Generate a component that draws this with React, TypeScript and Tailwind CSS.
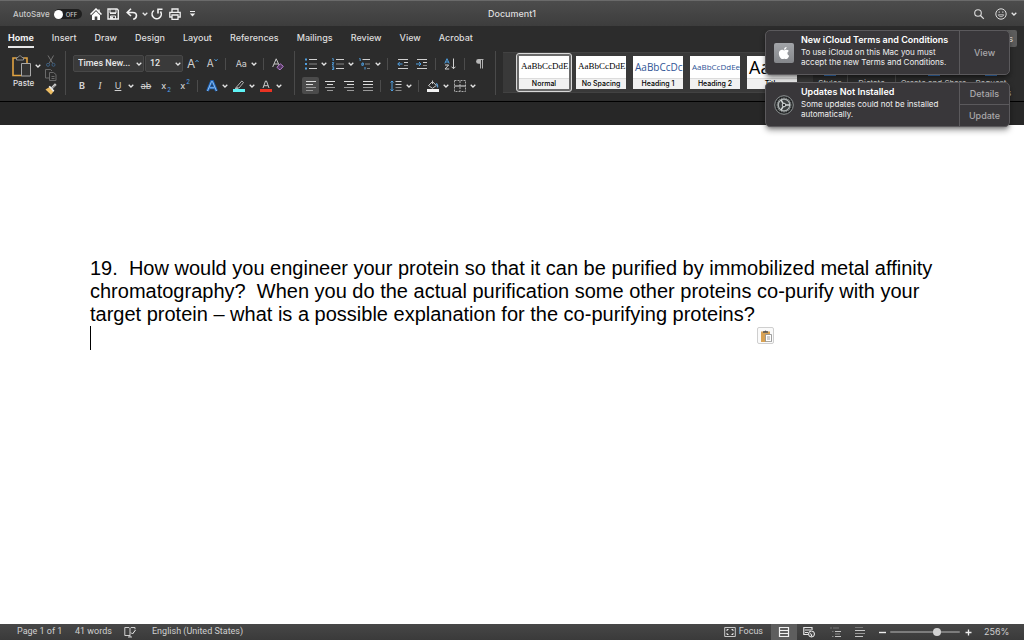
import type { ReactNode } from 'react'
import clsx from 'clsx'
import { FaApple } from 'react-icons/fa'

const TABS = ['Home', 'Insert', 'Draw', 'Design', 'Layout', 'References', 'Mailings', 'Review', 'View', 'Acrobat']

const STYLES = [
  { name: 'Normal', sample: 'AaBbCcDdE', face: 'font-["Liberation_Serif",serif] text-[9px] text-black' },
  { name: 'No Spacing', sample: 'AaBbCcDdE', face: 'font-["Liberation_Serif",serif] text-[9px] text-black' },
  { name: 'Heading 1', sample: 'AaBbCcDc', face: 'font-["Open_Sans",sans-serif] text-[10px] text-[#2f5496]' },
  { name: 'Heading 2', sample: 'AaBbCcDdEe', face: 'font-["Open_Sans",sans-serif] text-[8px] text-[#2f5496]' },
  { name: 'Title', sample: 'AaBb', face: 'font-["Open_Sans",sans-serif] text-[18px] text-black' },
]

function Icon({ children, w = 12, h = 12 }: { children: ReactNode; w?: number; h?: number }) {
  return (
    <svg width={w} height={h} viewBox={`0 0 ${w} ${h}`} fill="none" stroke="#d0d0d0" className="shrink-0" aria-hidden="true">
      {children}
    </svg>
  )
}

function Chevron() {
  return (
    <Icon w={6} h={4}>
      <path d="M.7.7 3 3 5.3.7" stroke="#e4e4e4" strokeWidth="1.3" />
    </Icon>
  )
}

function Tool({ label, className, children }: { label: string; className?: string; children: ReactNode }) {
  return (
    <button
      type="button"
      aria-label={label}
      className={clsx('flex h-[17px] min-w-3 shrink-0 items-center justify-center text-[#d0d0d0]', className)}
    >
      {children}
    </button>
  )
}

function SplitTool({ label, className, children }: { label: string; className?: string; children: ReactNode }) {
  return (
    <Tool label={label} className={clsx('gap-1', className)}>
      <span className="flex w-3 justify-center">{children}</span>
      <Chevron />
    </Tool>
  )
}

function Sep({ className }: { className?: string }) {
  return <span className={clsx('h-3 w-px shrink-0 bg-[#4c4c4c]', className)} />
}

function GroupSep() {
  return <span className="h-11 w-px shrink-0 bg-[#4a4a4a]" />
}

function TitleBar() {
  return (
    <header className="grid h-[26px] grid-cols-[1fr_auto_1fr] items-center border-t border-[#6a6a6a] bg-linear-to-b from-[#4c4c4c] to-[#3d3d3d] pt-px">
      <div className="flex items-center pl-[13px]">
        <label htmlFor="autosave" className="mr-1 text-[8px] font-medium text-[#c9c9c9]">AutoSave</label>
        <button
          id="autosave"
          type="button"
          role="switch"
          aria-checked="false"
          className="flex h-[10px] w-7 items-center gap-[3px] rounded-full bg-[#1f1f1f] text-[6px] font-medium text-[#c9c9c9]"
        >
          <span className="size-[9px] rounded-full bg-white" />
          OFF
        </button>
        <Tool label="Home" className="ml-2">
          <Icon>
            <path d="M.5 6.500 6 1l5.500 5.500" stroke="#fff" strokeWidth="1.500" />
            <path d="M9 1.500v3" stroke="#fff" strokeWidth="1.500" />
            <path d="M2 7.200 6 3.300l4 3.900V12H7.300V8.500H4.700V12H2z" fill="#fff" stroke="none" />
          </Icon>
        </Tool>
        <Tool label="Save" className="ml-[5px]">
          <Icon>
            <path d="M1 1h9l1.300 1.300V11H1z" stroke="#eee" strokeWidth="1.400" />
            <path d="M3 1v4h6V1M3.500 11V8h5v3z" stroke="#eee" />
            <path d="M4 8.500h2V11H4zM3 4.500h6v1.500H3z" fill="#eee" stroke="none" />
          </Icon>
        </Tool>
        <SplitTool label="Undo" className="ml-[7px]">
          <Icon>
            <path d="M5 .8 1.200 4.500 5 8M1.500 4.500h5.300c5 0 4.600 6 .4 6.700" stroke="#f2f2f2" strokeWidth="1.600" />
          </Icon>
        </SplitTool>
        <Tool label="Repeat" className="ml-[3px]">
          <Icon>
            <path d="M2.800 2.500a4.600 4.600 0 1 0 6.700 1M7 5.500V1.200h4.500" stroke="#f2f2f2" strokeWidth="1.600" />
          </Icon>
        </Tool>
        <Tool label="Print" className="ml-[6px]">
          <Icon>
            <path d="M3 4V1h6v3M3 9H.8V4.300h10.400V9H9" stroke="#eee" strokeWidth="1.300" />
            <path d="M3 7h6v4.300H3z" stroke="#eee" strokeWidth="1.300" />
          </Icon>
        </Tool>
        <Tool label="Customize toolbar" className="ml-[6px]">
          <Icon w={7} h={6}>
            <path d="M1 .5h5" stroke="#eee" />
            <path d="M.8 2.500h5.400L3.500 5.500z" fill="#eee" stroke="none" />
          </Icon>
        </Tool>
      </div>
      <h1 className="text-[9px] font-medium text-[#dedede]">Document1</h1>
      <div className="flex items-center justify-end pr-[7px]">
        <Tool label="Search">
          <Icon>
            <circle cx="5" cy="5" r="3.300" stroke="#ddd" strokeWidth="1.100" />
            <path d="m7.500 7.500 3.300 3.300" stroke="#ddd" strokeWidth="1.200" />
          </Icon>
        </Tool>
        <SplitTool label="Feedback" className="ml-[10px]">
          <Icon>
            <circle cx="6" cy="6" r="5.200" stroke="#ddd" />
            <path d="M3.300 6.800c.8 2.500 4.600 2.500 5.400 0z" stroke="#ddd" strokeWidth=".8" />
            <path d="M3.700 3.500h1v1.300h-1zM7.300 3.500h1v1.300h-1z" fill="#ddd" stroke="none" />
          </Icon>
        </SplitTool>
      </div>
    </header>
  )
}

function TabBar() {
  return (
    <nav className="flex h-6 items-start gap-[18px] pl-2">
      {TABS.map((tab, i) => (
        <button
          key={tab}
          type="button"
          className={clsx(
            'mt-1 border-b-2 text-[9px] leading-[16px]',
            i === 0 ? 'border-[#e6e6e6] font-bold text-[#f0f0f0]' : 'border-transparent font-medium text-[#dcdcdc]',
          )}
        >
          {tab}
        </button>
      ))}
      <button type="button" className="mt-1 mr-[7px] ml-auto h-[17px] rounded-[2px] bg-[#5c5c5c] px-1 text-[9px] font-medium text-[#d8d8d8]">
        Comments
      </button>
    </nav>
  )
}

function ClipboardGroup() {
  return (
    <div className="flex h-11 pl-3">
      <button type="button" className="flex w-[28px] flex-col items-start pt-1 text-[8px] leading-[10px] font-medium text-[#e0e0e0]">
        <span className="flex items-center gap-1">
          <Icon w={19} h={22}>
            <path d="M4.500 3H1v17.500h9M11.500 3H15v5" stroke="#e0a242" strokeWidth="1.600" />
            <path d="M4.500 5V2.500H6c.4-2.200 3.600-2.200 4 0h1.500V5z" stroke="#8f8f8f" />
            <path d="M9.500 8.500h9V21h-9z" fill="#333" stroke="#a8a8a8" />
          </Icon>
          <Chevron />
        </span>
        <span className="mt-px pl-px">Paste</span>
      </button>
      <div className="ml-1 flex w-[21px] flex-col justify-between">
        <button type="button" aria-label="Cut" className="pt-1 pl-px">
          <Icon>
            <path d="M3 .5 7.800 8.500M8.500.5 4 8.500" stroke="#737373" />
            <circle cx="3" cy="9.800" r="1.500" stroke="#3d5f80" />
            <circle cx="8.500" cy="9.800" r="1.500" stroke="#3d5f80" />
          </Icon>
        </button>
        <button type="button" aria-label="Copy" className="pl-px">
          <Icon>
            <path d="M4 9H.5V.5h5L7 2" stroke="#6a6a6a" />
            <path d="M4.500 3.500h4l2.500 2V11.500H4.500zM6.500 7.500h3M6.500 9.500h3" stroke="#6a6a6a" />
          </Icon>
        </button>
        <button type="button" aria-label="Format painter" className="pl-px">
          <Icon>
            <path d="M.5 6.500 4.500 4l4 4.500L6 11.800z" fill="#edbd63" stroke="none" />
            <path d="m4.300 3.300 4.500 5" stroke="#f5f5f5" strokeWidth="1.600" />
            <path d="M6.500 5.500 10.800 1.200" stroke="#d0d0d0" strokeWidth="2.400" />
            <path d="m7.500 5 2.500-2.500" stroke="#444" strokeWidth=".8" />
          </Icon>
        </button>
      </div>
    </div>
  )
}

function RibbonSelect({ label, className, value }: { label: string; className: string; value: string }) {
  return (
    <span className={clsx('relative flex h-[17px] shrink-0', className)}>
      <select
        aria-label={label}
        className="w-full appearance-none rounded-[2px] border border-[#484848] bg-[#3a3a3a] pl-1 font-[Roboto,sans-serif] text-[9px] font-medium text-[#e8e8e8]"
      >
        <option>{value}</option>
      </select>
      <span className="pointer-events-none absolute inset-y-0 right-[2px] flex items-center">
        <Chevron />
      </span>
    </span>
  )
}

function FontGroup() {
  return (
    <div className="flex h-11 w-[221px] shrink-0 flex-col gap-[5px] pt-1">
      <div className="flex h-[17px] items-center">
        <RibbonSelect label="Font" className="w-[71px]" value="Times New..." />
        <RibbonSelect label="Font size" className="ml-px w-[38px]" value="12" />
        <Tool label="Increase font size" className="ml-1 text-[12px]">
          A
          <Icon w={4} h={10}><path d="M.5 3 2 1.200 3.500 3" stroke="#4f9fe0" /></Icon>
        </Tool>
        <Tool label="Decrease font size" className="ml-[7px] text-[10px]">
          A
          <Icon w={4} h={12}><path d="M.5 1.200 2 3 3.500 1.200" stroke="#4f9fe0" /></Icon>
        </Tool>
        <Sep className="ml-[7px]" />
        <SplitTool label="Change case" className="ml-[9px] text-[9px]">Aa</SplitTool>
        <Sep className="ml-[6px]" />
        <Tool label="Clear formatting" className="ml-2">
          <Icon>
            <path d="M.7 9 4.200.8 7.500 8M2 6h4" stroke="#c8c8c8" />
            <path d="m5 9.200 3.300-3.400 3 2.500L8.500 11.500H7z" fill="#533760" stroke="#b77fd0" />
          </Icon>
        </Tool>
      </div>
      <div className="flex h-[17px] items-center pl-[3px] text-[9px]">
        <Tool label="Bold" className="font-bold">B</Tool>
        <Tool label="Italic" className="ml-[6px] font-['Liberation_Serif',serif] text-[10px] italic">I</Tool>
        <SplitTool label="Underline" className="ml-[6px] underline">U</SplitTool>
        <Tool label="Strikethrough" className="ml-[6px] text-[#a8a8a8] line-through">ab</Tool>
        <Tool label="Subscript" className="ml-2 gap-px font-medium">
          x<span className="pt-2 text-[6px] text-[#4f9fe0]">2</span>
        </Tool>
        <Tool label="Superscript" className="ml-[7px] gap-px font-medium">
          x<span className="pb-2 text-[6px] text-[#4f9fe0]">2</span>
        </Tool>
        <Sep className="ml-[6px]" />
        <SplitTool label="Text effects" className="ml-2">
          <Icon>
            <path d="M1.500 11 5.500 1.500h1L10.500 11M3.500 7.800h5" stroke="#1f62b5" strokeWidth="3" />
            <path d="M1.500 11 5.500 1.500h1L10.500 11M3.500 7.800h5" stroke="#8fc1f2" strokeWidth="1" />
          </Icon>
        </SplitTool>
        <SplitTool label="Highlight colour" className="ml-[5px]">
          <Icon>
            <path d="M4 6.500 8.800 1l1.700 1.500L6 8H4zM3.800 7 2 8.500h3" stroke="#b5b5b5" />
            <path d="M0 9h12v3H0z" fill="#5ff3f5" stroke="none" />
          </Icon>
        </SplitTool>
        <SplitTool label="Font colour" className="ml-[5px]">
          <Icon>
            <path d="M3 8 5.500 1h1L9 8M4 5.700h4" stroke="#c8c8c8" />
            <path d="M0 9h12v3H0z" fill="#ea3323" stroke="none" />
          </Icon>
        </SplitTool>
      </div>
    </div>
  )
}

function AlignIcon({ rows }: { rows: [number, number][] }) {
  return (
    <Icon>
      {rows.map(([x, w], i) => (
        <path key={i} d={`M${x} ${1.5 + i * 3}h${w}`} stroke={i < 2 ? '#dcdcdc' : '#9a9a9a'} />
      ))}
    </Icon>
  )
}

const ALIGNMENTS: { label: string; rows: [number, number][] }[] = [
  { label: 'Align left', rows: [[1, 10], [1, 7], [1, 10], [1, 7]] },
  { label: 'Center', rows: [[1, 10], [3, 6], [1, 10], [3, 6]] },
  { label: 'Align right', rows: [[1, 10], [4, 7], [1, 10], [4, 7]] },
  { label: 'Justify', rows: [[1, 10], [1, 10], [1, 10], [1, 10]] },
]

function ParagraphGroup() {
  return (
    <div className="flex h-11 w-[200px] shrink-0 flex-col gap-[5px] pt-1 pl-[7px]">
      <div className="flex h-[17px] items-center pl-[3px]">
        <SplitTool label="Bullets">
          <Icon>
            <path d="M4 1.500h8M4 10.500h8" stroke="#d0d0d0" />
            <path d="M4 6h8" stroke="#858585" />
            <path d="M0 .500h2v2H0zM0 5h2v2H0zM0 9.500h2v2H0z" fill="#4f9fe0" stroke="none" />
          </Icon>
        </SplitTool>
        <SplitTool label="Numbering" className="ml-[5px]">
          <Icon>
            <path d="M4 1.500h8M4 10.500h8" stroke="#d0d0d0" />
            <path d="M4 6h8" stroke="#858585" />
            <path d="M.3.600h.9v2.400M0 4.700h1.800L.2 7h1.800M0 8.800h1.700v2.700H0M.5 10.200h1" stroke="#4f9fe0" />
          </Icon>
        </SplitTool>
        <SplitTool label="Multilevel list" className="ml-[5px]">
          <Icon>
            <path d="M3.500 1.500H11" stroke="#d0d0d0" />
            <path d="M6 6h5M8 10.500h3" stroke="#858585" />
            <path d="M.3.600h.9v2.400M3 5h1.300v2.300H2.800zM6 9v2.500" stroke="#4f9fe0" />
          </Icon>
        </SplitTool>
        <Sep className="ml-[6px]" />
        <Tool label="Decrease indent" className="ml-[9px]">
          <Icon>
            <path d="M1 1.500h10M1 10.500h10M7 4.500h4" />
            <path d="M7 7.500h4" stroke="#858585" />
            <path d="M5.500 6H.8M2.800 4 .8 6l2 2" stroke="#4f9fe0" />
          </Icon>
        </Tool>
        <Tool label="Increase indent" className="ml-[7px]">
          <Icon>
            <path d="M1 1.500h10M1 10.500h10M7 4.500h4" />
            <path d="M7 7.500h4" stroke="#858585" />
            <path d="M0 6h5M3 4l2 2-2 2" stroke="#4f9fe0" />
          </Icon>
        </Tool>
        <Sep className="ml-[7px]" />
        <Tool label="Sort" className="ml-2">
          <Icon>
            <path d="M.8 5.500 3 .700 5.200 5.500M1.500 4h3" stroke="#4f9fe0" />
            <path d="M1 7h3.700L1 11h4.200M9.500.5v10.300M7.500 8.700l2 2 2-2" />
          </Icon>
        </Tool>
        <Sep className="ml-2" />
        <Tool label="Show formatting marks" className="ml-[9px]">
          <Icon>
            <path d="M9.500 1.500H5M6.500 1.500v9M8.500 1.500v9" stroke="#b0b0b0" />
            <path d="M6.500 1h-2a2.400 2.400 0 0 0 0 4.800h2z" fill="#b8b8b8" stroke="none" />
          </Icon>
        </Tool>
      </div>
      <div className="flex h-[17px] items-center">
        {ALIGNMENTS.map((a, i) => (
          <Tool key={a.label} label={a.label} className={clsx('mr-[2px] w-[17px] rounded-[2px]', i === 0 && 'bg-[#4b4b4b]')}>
            <AlignIcon rows={a.rows} />
          </Tool>
        ))}
        <Sep className="ml-[2px]" />
        <SplitTool label="Line spacing" className="ml-[9px]">
          <Icon>
            <path d="M2 1v10M.5 2.500 2 1l1.500 1.500M.5 9.500 2 11l1.500-1.500" stroke="#4f9fe0" />
            <path d="M5.500 1.500h6M5.500 4.500h6" />
            <path d="M5.500 7.500h6M5.500 10.500h6" stroke="#8a8a8a" />
          </Icon>
        </SplitTool>
        <Sep className="ml-[6px]" />
        <SplitTool label="Shading" className="ml-2">
          <Icon>
            <path d="M1.500 5.500 5.500 1.500l3.800 4L5.500 8.300zM5.500 4V.5" stroke="#c4c4c4" />
            <path d="M9 3.500c1.500.5 1.800 2 1.500 4" stroke="#5c9bd0" strokeWidth="1.300" />
            <path d="M0 9h12v3H0z" fill="#f2f2f2" stroke="none" />
          </Icon>
        </SplitTool>
        <SplitTool label="Borders" className="ml-[5px]">
          <Icon>
            <path d="M.5.500h11v11H.5zM6 1v10" strokeDasharray="2 1" stroke="#a8a8a8" />
            <path d="M.5 6h11" stroke="#e4e4e4" />
          </Icon>
        </SplitTool>
      </div>
    </div>
  )
}

function StyleGallery() {
  return (
    <div className="mt-px ml-[7px] flex h-[41px] w-[310px] shrink-0 items-center gap-px border-y border-[#424242] bg-[#393939] pl-[13px]">
      {STYLES.map((s, i) => (
        <button
          key={s.name}
          type="button"
          className={clsx(
            'h-[39px] w-14 shrink-0 rounded-[3px] border p-[2px]',
            i === 0 ? 'border-[#d8d8d8] bg-[#6a6a6a]' : 'border-transparent',
          )}
        >
          <span className="flex h-[33px] w-full flex-col overflow-hidden bg-white">
            <span className={clsx('flex h-[22px] items-center overflow-hidden pl-[2px] whitespace-nowrap', s.face)}>
              {s.sample}
            </span>
            <span className="h-[11px] border-t border-[#dcdcdc] bg-[#f1f1f1] text-center text-[7px] leading-[10px] font-medium whitespace-nowrap text-black">
              {s.name}
            </span>
          </span>
        </button>
      ))}
    </div>
  )
}

function RibbonTail() {
  const items = [
    { top: 'Styles', bottom: 'Pane', cls: 'w-[34px]' },
    { top: 'Dictate', bottom: '', cls: 'w-12 border-l' },
    { top: 'Create and Share', bottom: 'Adobe PDF', cls: 'w-[76px] border-l' },
    { top: 'Request', bottom: 'Signatures', cls: 'w-10' },
  ]
  return (
    <div className="flex h-12 text-[8px] leading-[10px] text-[#c8c8c8]">
      {items.map((it, i) => (
        <button key={it.top} type="button" className={clsx('flex flex-col items-center border-[#4a4a4a] whitespace-nowrap', it.cls)}>
          <span className={clsx('mt-1 mb-[2px] h-[21px] w-3 shrink-0', i === 1 ? 'bg-transparent' : 'bg-[#3b7cc9]')} />
          <span>{it.top}</span>
          <span>{it.bottom}</span>
        </button>
      ))}
    </div>
  )
}

function Document() {
  return (
    <main className="flex-1 bg-white pt-[132px] pr-20 pl-[90px] font-['Liberation_Sans',Arial,sans-serif] text-[20px] leading-[23px] text-black">
      <p className="whitespace-pre-wrap">
        {'19.  How would you engineer your protein so that it can be purified by immobilized metal affinity chromatography?  When you do the actual purification some other proteins co-purify with your target protein – what is a possible explanation for the co-purifying proteins?'}
      </p>
      <div className="relative h-6 border-l border-black">
        <button
          type="button"
          aria-label="Paste options"
          className="absolute top-px left-[666px] flex size-[17px] items-center justify-center rounded-[2px] border border-[#cfcfcf] bg-[#fafafa]"
        >
          <Icon>
            <path d="M1 1.500h9V12H1z" fill="#d9a253" stroke="none" />
            <path d="M3 2.800V1.200h1.500a1.200 1 0 0 1 2 0H8v1.600z" fill="#555" stroke="none" />
            <path d="M5.500 4.500h6v7.200h-6z" fill="#fff" stroke="#888" strokeWidth=".8" />
            <path d="M7 7h3M7 9h3" stroke="#888" strokeWidth=".8" />
          </Icon>
        </button>
      </div>
    </main>
  )
}

function GearIcon() {
  const teeth = Array.from({ length: 20 }, (_, i) => i * 18)
  return (
    <svg width="20" height="20" viewBox="0 0 20 20" fill="none" aria-hidden="true">
      <circle cx="10" cy="10" r="9.300" fill="#232526" stroke="#8f9495" strokeWidth="1" />
      {teeth.map((a) => (
        <path key={a} d="M10 2.500v1.500" stroke="#9aa0a0" strokeWidth="1" transform={`rotate(${a} 10 10)`} />
      ))}
      <circle cx="10" cy="10" r="5.800" fill="#3c4041" stroke="#b0b5b5" strokeWidth="1.300" />
      {[0, 120, 240].map((a) => (
        <path key={a} d="M10 10h6" stroke="#d4d8d8" strokeWidth="1.500" transform={`rotate(${a} 10 10)`} />
      ))}
      <circle cx="10" cy="10" r="1.800" fill="#2b2d2e" stroke="#d4d8d8" />
    </svg>
  )
}

function Notice({ icon, title, body, actions }: { icon: ReactNode; title: string; body: string; actions: string[] }) {
  return (
    <section className="flex h-[45px] overflow-hidden rounded-[5px] border border-[#5b595c] bg-[#39373a] shadow-md shadow-black/40">
      <div className="flex w-[35px] shrink-0 items-center justify-center">{icon}</div>
      <div className="flex-1 pt-1 text-[8px] leading-[10px] text-[#f0f0f0]">
        <h2 className="mb-[2px] text-[9px] font-semibold whitespace-nowrap text-white">{title}</h2>
        <p className="w-[152px]">{body}</p>
      </div>
      <div className="flex w-[50px] shrink-0 flex-col divide-y divide-[#5b595c] border-l border-[#5b595c]">
        {actions.map((a) => (
          <button key={a} type="button" className="flex-1 text-[9px] font-medium text-[#a9a8aa]">
            {a}
          </button>
        ))}
      </div>
    </section>
  )
}

function Notices() {
  return (
    <aside className="absolute top-[30px] right-[14px] flex w-[245px] flex-col gap-[7px]">
      <Notice
        icon={
          <span className="flex size-5 items-center justify-center rounded-[2px] bg-linear-to-b from-[#a2a4a8] to-[#85878b]">
            <FaApple className="size-[14px] text-white" />
          </span>
        }
        title="New iCloud Terms and Conditions"
        body="To use iCloud on this Mac you must accept the new Terms and Conditions."
        actions={['View']}
      />
      <Notice
        icon={<GearIcon />}
        title="Updates Not Installed"
        body="Some updates could not be installed automatically."
        actions={['Details', 'Update']}
      />
    </aside>
  )
}

function StatusBar() {
  return (
    <footer className="flex h-4 items-center bg-linear-to-b from-[#474747] to-[#3a3a3a] font-[Roboto,sans-serif] text-[9px] text-[#cfcfcf]">
      <span className="ml-[17px] w-[58px]">Page 1 of 1</span>
      <span className="w-[49px]">41 words</span>
      <Tool label="Proofing">
        <Icon>
          <path d="M6 9.500H.8V1.500H5l1 1 1-1h4v1.800M6 2.500V11M4 11h4" />
          <path d="M7 6.500 8.500 8 11.500 4" stroke="#eee" />
        </Icon>
      </Tool>
      <button type="button" className="ml-4">English (United States)</button>
      <button type="button" className="ml-auto flex items-center gap-[3px]">
        <Icon>
          <path d="M.700 1.500h10.600v9H.700z" stroke="#c8c8c8" />
          <path d="M3 5V3.500h1.500M7.500 3.500H9V5M9 7v1.500H7.500M4.500 8.500H3V7" stroke="#e8e8e8" />
        </Icon>
        Focus
      </button>
      <Tool label="Print layout" className="ml-2 h-4 w-[26px] bg-[#5e5e5e]">
        <Icon>
          <path d="M1.500 1.500h9v9h-9zM1.500 4.500h9M1.500 7.500h9" stroke="#f0f0f0" strokeWidth="1.200" />
        </Icon>
      </Tool>
      <Tool label="Web layout" className="ml-[6px]">
        <Icon>
          <path d="M9 4V1.500H.8v7H5M2 4h6M2 6.500h3" stroke="#e4e4e4" strokeWidth="1.200" />
          <circle cx="8.500" cy="8" r="3" fill="#505050" stroke="#eee" />
          <path d="M7 7.500 8.500 8.500v2" stroke="#eee" />
        </Icon>
      </Tool>
      <Tool label="Outline" className="ml-[15px]">
        <Icon>
          <path d="M0 2h2M3 2h6M2 5.500h1.500" stroke="#777" />
          <path d="M5 5.500h6M5 10.500h6" stroke="#c4c4c4" />
          <path d="M5 8h5M2 10.500h1.500" stroke="#888" />
        </Icon>
      </Tool>
      <Tool label="Draft" className="ml-3">
        <Icon>
          <path d="M1 1.500h8" stroke="#777" />
          <path d="M1 4.500h10M1 10.500h8" stroke="#c4c4c4" />
          <path d="M1 7.500h10" stroke="#999" />
        </Icon>
      </Tool>
      <Tool label="Zoom out" className="ml-[10px]">
        <Icon w={7} h={7}><path d="M0 3.500h7" stroke="#eee" strokeWidth="1.400" /></Icon>
      </Tool>
      <input
        type="range"
        aria-label="Zoom"
        min={10}
        max={500}
        defaultValue={352}
        className="ml-[2px] h-[2px] w-[70px] appearance-none rounded-full bg-[#7c7c7c] [&::-webkit-slider-thumb]:size-2 [&::-webkit-slider-thumb]:appearance-none [&::-webkit-slider-thumb]:rounded-full [&::-webkit-slider-thumb]:bg-[#d2d2d2]"
      />
      <Tool label="Zoom in" className="ml-[2px]">
        <Icon w={7} h={7}><path d="M.5 3.500h6M3.500.500v6" stroke="#eee" strokeWidth="1.300" /></Icon>
      </Tool>
      <span className="ml-[10px] w-10 font-[Inter,sans-serif]">256%</span>
    </footer>
  )
}

export default function App() {
  return (
    <div className="relative flex min-h-screen flex-col overflow-hidden bg-[#2c2c2c] font-[Inter,sans-serif]">
      <TitleBar />
      <TabBar />
      <div className="flex h-[51px] items-start pt-px">
        <ClipboardGroup />
        <GroupSep />
        <div className="flex pl-[7px]">
          <FontGroup />
        </div>
        <GroupSep />
        <ParagraphGroup />
        <GroupSep />
        <StyleGallery />
        <RibbonTail />
      </div>
      <div className="h-6 border-t border-black bg-[#272727]" />
      <Document />
      <StatusBar />
      <Notices />
    </div>
  )
}
